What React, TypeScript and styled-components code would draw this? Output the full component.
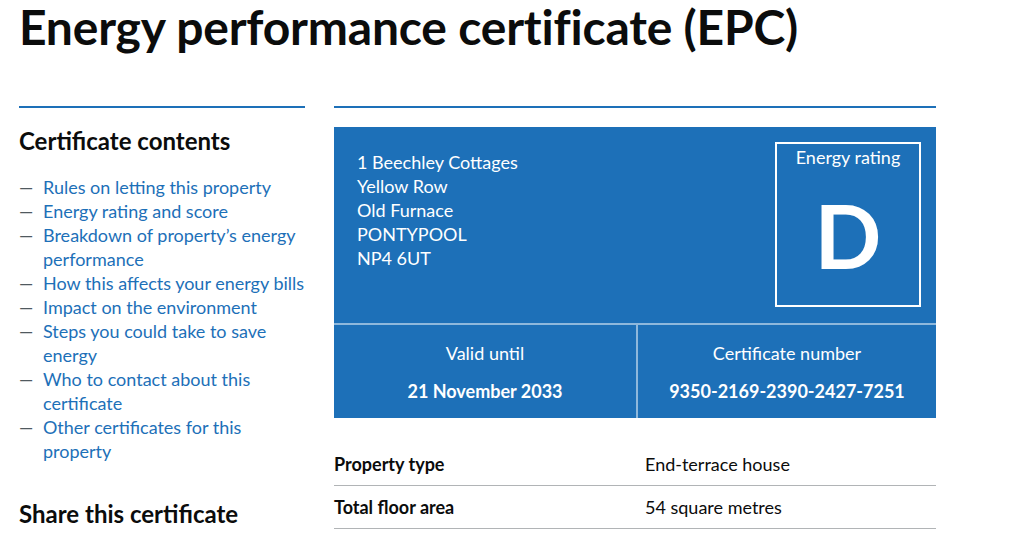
import React from "react";
import styled, { createGlobalStyle } from "styled-components";

const GlobalStyle = createGlobalStyle`
  body {
    margin: 0;
    background: #ffffff;
    color: #0b0c0c;
    font-family: Lato, "Liberation Sans", Arial, sans-serif;
  }
`;

const Page = styled.div`
  padding: 0 19px;
`;

const Title = styled.h1`
  margin: 0;
  padding-top: 2px;
  font-size: 48px;
  line-height: 50px;
  font-weight: 700;
  letter-spacing: -0.2px;
`;

const Grid = styled.div`
  display: grid;
  grid-template-columns: 286px 602px;
  column-gap: 29px;
  margin-top: 54px;
`;

const Column = styled.div`
  border-top: 2px solid #1d70b8;
`;

const SideHeading = styled.h2`
  margin: 0;
  padding-top: 18px;
  font-size: 24px;
  line-height: 30px;
  font-weight: 700;
`;

const NavList = styled.ul`
  list-style: none;
  margin: 0;
  padding: 0;
  margin-top: 19px;
`;

const NavItem = styled.li`
  display: flex;
  font-size: 18px;
  line-height: 24px;
`;

const Dash = styled.span`
  flex: 0 0 24px;
  color: #505a5f;
`;

const NavLink = styled.a`
  color: #1d70b8;
  text-decoration: none;
`;

const ShareHeading = styled(SideHeading)`
  padding-top: 36px;
`;

const SummaryBox = styled.div`
  margin-top: 19px;
  background: #1d70b8;
  color: #ffffff;
`;

const SummaryTop = styled.div`
  display: flex;
  justify-content: space-between;
  align-items: flex-start;
  height: 198px;
  padding: 15px 15px 0 23px;
  box-sizing: border-box;
  border-bottom: 2px solid #8eb8dc;
`;

const Address = styled.p`
  margin: 8px 0 0;
  font-size: 18px;
  line-height: 24px;
`;

const RatingBox = styled.div`
  width: 146px;
  height: 165px;
  box-sizing: border-box;
  border: 2px solid #ffffff;
  text-align: center;
`;

const RatingLabel = styled.div`
  padding-top: 1px;
  font-size: 18px;
  line-height: 24px;
`;

const RatingLetter = styled.div`
  margin-top: 16px;
  font-size: 88px;
  line-height: 100px;
  font-weight: 700;
`;

const SummaryBottom = styled.div`
  display: grid;
  grid-template-columns: 302px 1fr;
  height: 93px;
`;

const SummaryCell = styled.div<{ $divider?: boolean }>`
  text-align: center;
  padding-top: 16px;
  box-sizing: border-box;
  border-left: ${(p) => (p.$divider ? "2px solid #8eb8dc" : "none")};
`;

const CellLabel = styled.div`
  font-size: 18px;
  line-height: 24px;
`;

const CellValue = styled.div`
  margin-top: 14px;
  font-size: 18px;
  line-height: 24px;
  font-weight: 700;
`;

const Details = styled.dl`
  margin: 25px 0 0;
`;

const DetailRow = styled.div`
  display: grid;
  grid-template-columns: 311px 1fr;
  padding: 9px 0;
  border-bottom: 1px solid #b1b4b6;
  font-size: 18px;
  line-height: 24px;
`;

const DetailKey = styled.dt`
  font-weight: 700;
`;

const DetailValue = styled.dd`
  margin: 0;
`;

const contents = [
  "Rules on letting this property",
  "Energy rating and score",
  "Breakdown of property\u2019s energy performance",
  "How this affects your energy bills",
  "Impact on the environment",
  "Steps you could take to save energy",
  "Who to contact about this certificate",
  "Other certificates for this property",
];

const address = [
  "1 Beechley Cottages",
  "Yellow Row",
  "Old Furnace",
  "PONTYPOOL",
  "NP4 6UT",
];

const details = [
  { key: "Property type", value: "End-terrace house" },
  { key: "Total floor area", value: "54 square metres" },
];

const App = () => {
  return (
    <Page>
      <GlobalStyle />
      <Title>Energy performance certificate (EPC)</Title>
      <Grid>
        <Column>
          <SideHeading>Certificate contents</SideHeading>
          <NavList>
            {contents.map((item) => (
              <NavItem key={item}>
                <Dash>—</Dash>
                <NavLink href="#">{item}</NavLink>
              </NavItem>
            ))}
          </NavList>
          <ShareHeading>Share this certificate</ShareHeading>
        </Column>
        <Column>
          <SummaryBox>
            <SummaryTop>
              <Address>
                {address.map((line) => (
                  <React.Fragment key={line}>
                    {line}
                    <br />
                  </React.Fragment>
                ))}
              </Address>
              <RatingBox>
                <RatingLabel>Energy rating</RatingLabel>
                <RatingLetter>D</RatingLetter>
              </RatingBox>
            </SummaryTop>
            <SummaryBottom>
              <SummaryCell>
                <CellLabel>Valid until</CellLabel>
                <CellValue>21 November 2033</CellValue>
              </SummaryCell>
              <SummaryCell $divider>
                <CellLabel>Certificate number</CellLabel>
                <CellValue>9350-2169-2390-2427-7251</CellValue>
              </SummaryCell>
            </SummaryBottom>
          </SummaryBox>
          <Details>
            {details.map((row) => (
              <DetailRow key={row.key}>
                <DetailKey>{row.key}</DetailKey>
                <DetailValue>{row.value}</DetailValue>
              </DetailRow>
            ))}
          </Details>
        </Column>
      </Grid>
    </Page>
  );
};

export default App;
